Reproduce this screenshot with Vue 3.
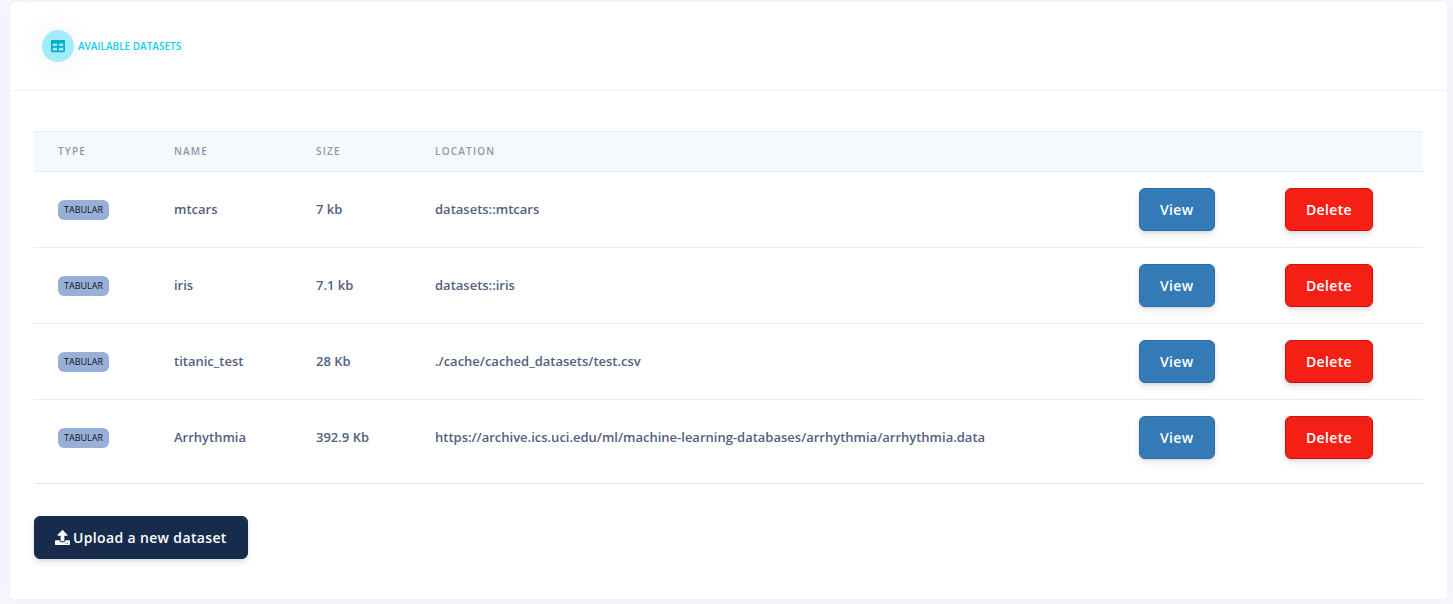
<script setup>
const datasets = [
  { type: 'tabular', name: 'mtcars', size: '7 kb', location: 'datasets::mtcars' },
  { type: 'tabular', name: 'iris', size: '7.1 kb', location: 'datasets::iris' },
  { type: 'tabular', name: 'titanic_test', size: '28 Kb', location: './cache/cached_datasets/test.csv' },
  {
    type: 'tabular',
    name: 'Arrhythmia',
    size: '392.9 Kb',
    location: 'https://archive.ics.uci.edu/ml/machine-learning-databases/arrhythmia/arrhythmia.data',
  },
]
</script>

<template>
  <main class="page">
    <section class="card">
      <header class="card-header">
        <span class="icon-shape">
          <svg class="icon-table" viewBox="0 0 512 512" aria-hidden="true">
            <path d="M464 32H48C21.49 32 0 53.49 0 80v352c0 26.51 21.49 48 48 48h416c26.51 0 48-21.49 48-48V80c0-26.51-21.49-48-48-48zM224 416H64v-96h160v96zm0-160H64v-96h160v96zm224 160H288v-96h160v96zm0-160H288v-96h160v96z" />
          </svg>
        </span>
        <h1 class="title">Available datasets</h1>
      </header>

      <div class="card-body">
        <table class="datasets">
          <colgroup>
            <col class="col-type" />
            <col class="col-name" />
            <col class="col-size" />
            <col />
            <col class="col-view" />
            <col class="col-delete" />
          </colgroup>
          <thead>
            <tr>
              <th scope="col">Type</th>
              <th scope="col">Name</th>
              <th scope="col">Size</th>
              <th scope="col">Location</th>
              <td></td>
              <td></td>
            </tr>
          </thead>
          <tbody>
            <tr v-for="d in datasets" :key="d.name">
              <td><span class="badge">{{ d.type }}</span></td>
              <td>{{ d.name }}</td>
              <td>{{ d.size }}</td>
              <td>{{ d.location }}</td>
              <td><button type="button" class="btn btn-view">View</button></td>
              <td><button type="button" class="btn btn-delete">Delete</button></td>
            </tr>
          </tbody>
        </table>
        <hr class="divider" />
        <button type="button" class="btn btn-upload">
          <svg class="icon-upload" viewBox="0 0 512 512" aria-hidden="true">
            <path d="M296 384h-80c-13.3 0-24-10.7-24-24V192h-87.7c-17.8 0-26.7-21.5-14.1-34.1L242.3 5.7c7.5-7.5 19.8-7.5 27.3 0l152.2 152.2c12.6 12.6 3.7 34.1-14.1 34.1H320v168c0 13.3-10.7 24-24 24zm216-8v112c0 13.3-10.7 24-24 24H24c-13.3 0-24-10.7-24-24V376c0-13.3 10.7-24 24-24h136v8c0 30.9 25.1 56 56 56h80c30.9 0 56-25.1 56-56v-8h136c13.3 0 24 10.7 24 24zm-124 88c0-6-9-10-20-10s-20 4-20 10 9 10 20 10 20-4 20-10zm64 0c0-6-9-10-20-10s-20 4-20 10 9 10 20 10 20-4 20-10z" />
          </svg>
          <span>Upload a new dataset</span>
        </button>
      </div>
    </section>
  </main>
</template>

<style>
body {
  background: #f8f9fe;
}
</style>

<style scoped>
.page {
  padding: 1px 5px 4px 9px;
  font-family: "Open Sans", "Noto Sans", sans-serif;
  color: #525f7f;
}

.card {
  background: #fff;
  border: 1px solid rgba(0, 0, 0, 0.05);
  border-radius: 6px;
  box-shadow: 0 0 32px rgba(136, 152, 170, 0.1);
}

.card-header {
  display: flex;
  align-items: center;
  gap: 4px;
  padding: 28px 32px;
  border-bottom: 1px solid rgba(0, 0, 0, 0.05);
}

.icon-shape {
  display: flex;
  align-items: center;
  justify-content: center;
  width: 32px;
  height: 32px;
  border-radius: 50%;
  background: #a0ecf8;
  box-shadow: 0 0 24px rgba(136, 152, 170, 0.15);
}

.icon-table {
  width: 14px;
  height: 14px;
  fill: #03acca;
}

.title {
  margin: 0;
  font-size: 10px;
  font-weight: 600;
  line-height: 16px;
  text-transform: uppercase;
  color: #11cdef;
}

.card-body {
  padding: 40px 24px;
}

.datasets {
  width: 100%;
  table-layout: fixed;
  border-collapse: separate;
  border-spacing: 0;
  text-align: left;
}

.col-type {
  width: 116px;
}

.col-name {
  width: 142px;
}

.col-size {
  width: 119px;
}

.col-view {
  width: 146px;
}

.col-delete {
  width: 162px;
}

thead th,
thead td {
  padding: 12px 24px;
  background: #f6f9fc;
  border-top: 1px solid #e9ecef;
  font-size: 10px;
  font-weight: 600;
  line-height: 15px;
  letter-spacing: 0.12em;
  text-transform: uppercase;
  color: #8898aa;
}

tbody td {
  padding: 16px 24px;
  border-top: 1px solid #e9ecef;
  font-size: 13px;
  font-weight: 600;
  line-height: 19px;
  white-space: nowrap;
  vertical-align: middle;
}

.badge {
  display: inline-block;
  padding: 4px 6px;
  border-radius: 6px;
  background: #98afd8;
  font-size: 9px;
  font-weight: 500;
  line-height: 12px;
  text-transform: uppercase;
  color: #0b1526;
  vertical-align: middle;
}

.btn {
  display: inline-flex;
  align-items: center;
  gap: 3px;
  padding: 10px 20px;
  border: 1px solid;
  border-radius: 6px;
  font-family: inherit;
  font-size: 14px;
  font-weight: 600;
  line-height: 21px;
  letter-spacing: 0.025em;
  color: #fff;
  cursor: pointer;
  vertical-align: middle;
  box-shadow: 0 4px 6px rgba(50, 50, 93, 0.11), 0 1px 3px rgba(0, 0, 0, 0.08);
}

.btn-view {
  background: #337ab7;
  border-color: #2e6da4;
}

.btn-delete {
  background: #f52015;
  border-color: #c9160d;
}

.btn-upload {
  background: #172b4d;
  border-color: #172b4d;
}

.icon-upload {
  width: 15px;
  height: 15px;
  fill: currentColor;
}

.divider {
  margin: 8px 0 32px;
  border: 0;
  border-top: 1px solid rgba(0, 0, 0, 0.1);
}
</style>
